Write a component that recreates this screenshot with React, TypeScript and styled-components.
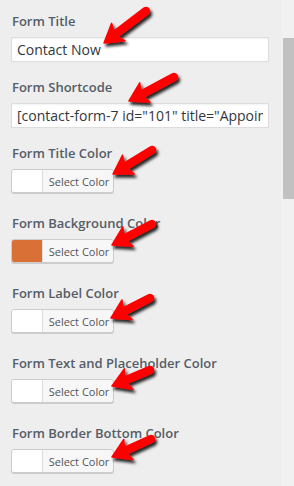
import styled, { createGlobalStyle } from "styled-components";

const GlobalStyle = createGlobalStyle`
  html, body {
    margin: 0;
    padding: 0;
    background: #eeeeee;
  }
  * { box-sizing: border-box; }
`;

type Arrow = { tail: [number, number]; tip: [number, number] };

const arrows: Arrow[] = [
  { tail: [146, 11], tip: [104, 43] },
  { tail: [174, 77], tip: [129, 101] },
  { tail: [152, 150], tip: [113, 174] },
  { tail: [152, 224], tip: [112, 245] },
  { tail: [150, 298], tip: [111, 318] },
  { tail: [150, 370], tip: [112, 386] },
  { tail: [151, 439], tip: [112, 457] },
];

const colorFields = [
  { label: "Form Title Color", swatch: "#ffffff" },
  { label: "Form Background Color", swatch: "#d97036" },
  { label: "Form Label Color", swatch: "#ffffff" },
  { label: "Form Text and Placeholder Color", swatch: "#ffffff" },
  { label: "Form Border Bottom Color", swatch: "#ffffff" },
];

const App = () => {
  return (
    <>
      <GlobalStyle />
      <Screen>
        <Panel>
          <TextField>
            <Label>Form Title</Label>
            <Input readOnly value="Contact Now" />
          </TextField>
          <TextField>
            <Label>Form Shortcode</Label>
            <Input readOnly value={'[contact-form-7 id="101" title="Appointment"]'} />
          </TextField>
          {colorFields.map((f) => (
            <ColorField key={f.label}>
              <Label>{f.label}</Label>
              <ColorButton>
                <Swatch $color={f.swatch} />
                <ButtonText>Select Color</ButtonText>
              </ColorButton>
            </ColorField>
          ))}
        </Panel>
        <Scrollbar>
          <Thumb />
        </Scrollbar>
        <Overlay width="294" height="486" viewBox="0 0 294 486">
          <defs>
            <filter id="shadow" x="-30%" y="-30%" width="160%" height="160%">
              <feDropShadow dx="2" dy="3" stdDeviation="1.4" floodColor="#000" floodOpacity="0.85" />
            </filter>
          </defs>
          {arrows.map((a, i) => {
            const [tx, ty] = a.tail;
            const [px, py] = a.tip;
            const dx = px - tx;
            const dy = py - ty;
            const len = Math.hypot(dx, dy);
            const ux = dx / len;
            const uy = dy / len;
            const nx = -uy;
            const ny = ux;
            const headLen = 18;
            const headW = 11;
            const bx = px - ux * headLen;
            const by = py - uy * headLen;
            const sx = px - ux * (headLen - 3);
            const sy = py - uy * (headLen - 3);
            return (
              <g key={i} filter="url(#shadow)">
                <line
                  x1={tx}
                  y1={ty}
                  x2={sx}
                  y2={sy}
                  stroke="#ff0000"
                  strokeWidth={8.5}
                  strokeLinecap="round"
                />
                <polygon
                  points={`${px},${py} ${bx + nx * headW},${by + ny * headW} ${bx + ux * 3 + nx * 3},${by + uy * 3 + ny * 3} ${bx + ux * 3 - nx * 3},${by + uy * 3 - ny * 3} ${bx - nx * headW},${by - ny * headW}`}
                  fill="#ff0000"
                  strokeLinejoin="round"
                  stroke="#ff0000"
                  strokeWidth={1.5}
                />
              </g>
            );
          })}
        </Overlay>
      </Screen>
    </>
  );
};

const Screen = styled.div`
  position: relative;
  display: flex;
  width: 294px;
  height: 486px;
  overflow: hidden;
  background: #eeeeee;
  font-family: "Open Sans", "Liberation Sans", sans-serif;
`;

const Panel = styled.div`
  width: 281px;
  padding: 11px 12px 0 11px;
  display: flex;
  flex-direction: column;
`;

const TextField = styled.div`
  display: flex;
  flex-direction: column;
  margin-bottom: 15px;
`;

const ColorField = styled.div`
  display: flex;
  flex-direction: column;
  align-items: flex-start;
  margin-bottom: 20px;
`;

const Label = styled.div`
  font-size: 13px;
  line-height: 20px;
  font-weight: 600;
  color: #555d66;
  padding-left: 1px;
  margin-bottom: 6px;
  white-space: nowrap;
`;

const Input = styled.input`
  width: 258px;
  height: 25px;
  padding: 0 5px;
  border: 1px solid #dddddd;
  background: #ffffff;
  box-shadow: inset 0 1px 2px rgba(0, 0, 0, 0.05);
  font-family: "Open Sans", "Liberation Sans", sans-serif;
  font-size: 14px;
  color: #32373c;
  outline: none;
`;

const ColorButton = styled.div`
  display: flex;
  width: 103px;
  height: 24px;
  border: 1px solid #cccccc;
  border-radius: 3px;
  box-shadow: 0 1px 0 #cccccc;
  background: #f7f7f7;
  overflow: hidden;
`;

const Swatch = styled.div<{ $color: string }>`
  width: 31px;
  background: ${({ $color }) => $color};
  border-right: 1px solid #dddddd;
`;

const ButtonText = styled.div`
  flex: 1;
  display: flex;
  align-items: center;
  justify-content: center;
  padding-left: 2px;
  font-size: 11px;
  color: #555555;
`;

const Scrollbar = styled.div`
  width: 13px;
  background: #f1f1f1;
  padding: 38px 0 0 2px;
`;

const Thumb = styled.div`
  height: 161px;
  background: #c1c1c1;
`;

const Overlay = styled.svg`
  position: absolute;
  inset: 0;
  pointer-events: none;
`;

export default App;
